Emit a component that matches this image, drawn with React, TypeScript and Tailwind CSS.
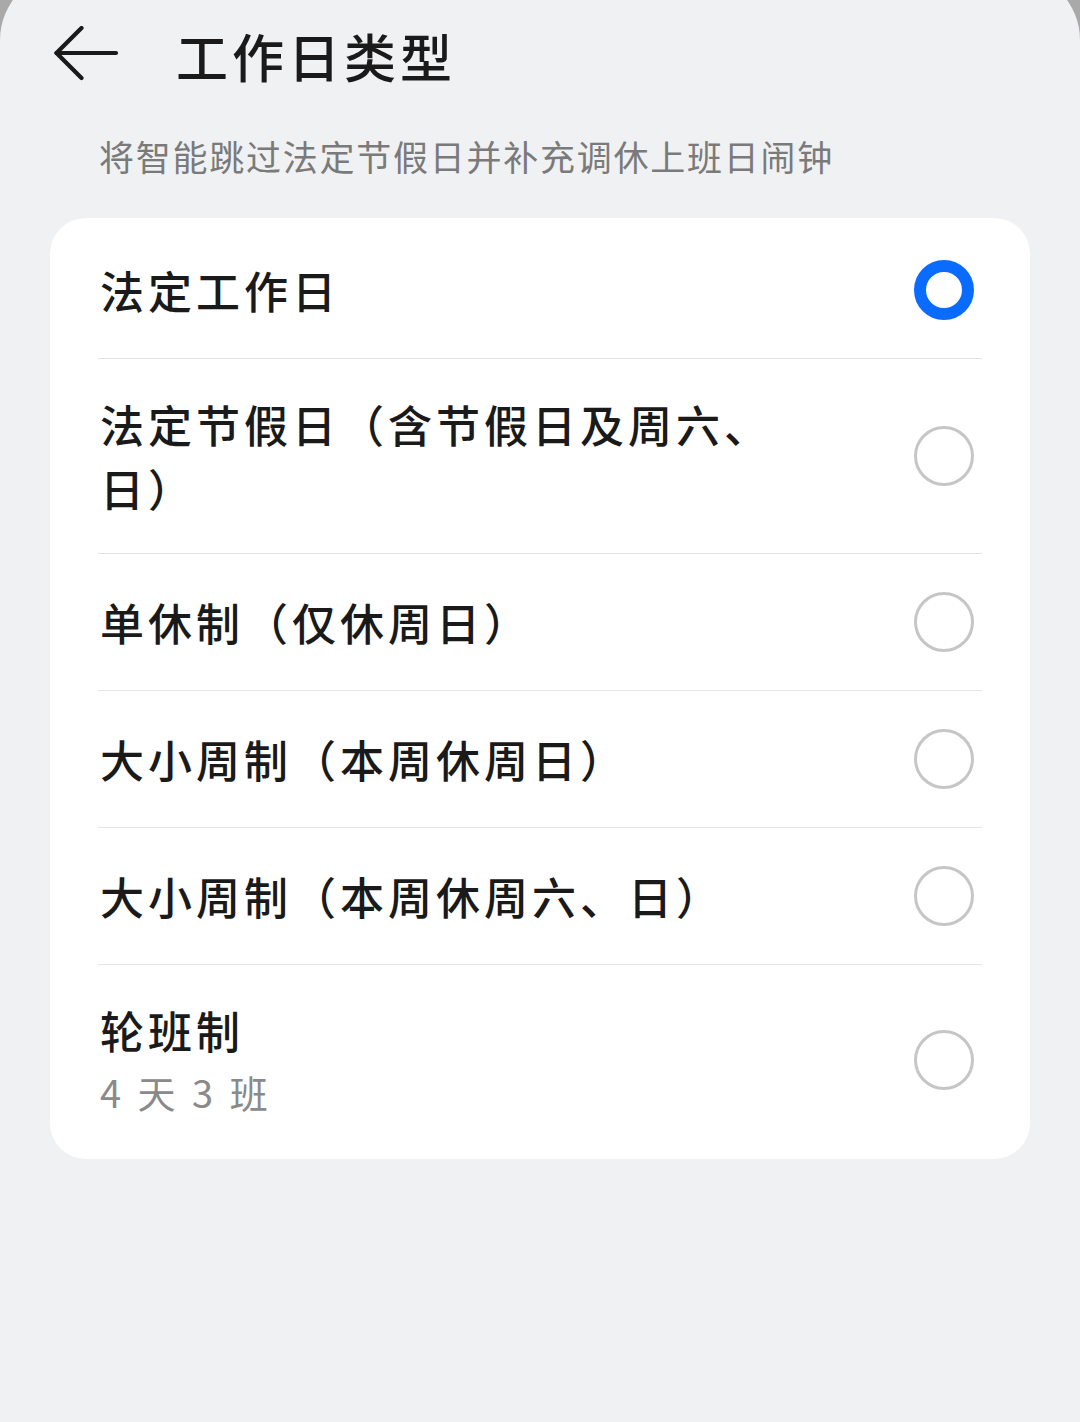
import React from "react";

const font = { fontFamily: '"Noto Sans CJK SC", "Noto Sans", sans-serif' };

type Item = { title: string; sub?: string; checked?: boolean };

const items: Item[] = [
  { title: "法定工作日", checked: true },
  { title: "法定节假日（含节假日及周六、日）" },
  { title: "单休制（仅休周日）" },
  { title: "大小周制（本周休周日）" },
  { title: "大小周制（本周休周六、日）" },
  { title: "轮班制", sub: "4 天 3 班" },
];

function Radio({ checked }: { checked?: boolean }) {
  if (checked) {
    return (
      <div className="w-[60px] h-[60px] rounded-full border-[12px] border-[#0a6cff] bg-white shrink-0" />
    );
  }
  return (
    <div className="w-[60px] h-[60px] rounded-full border-[3px] border-[#c6c6c6] bg-white shrink-0" />
  );
}

export default function App() {
  return (
    <div
      className="w-[1080px] h-[1422px] bg-[#a9a9a9] overflow-hidden [text-spacing-trim:space-all]"
      style={font}
    >
      <div className="-mt-[28px] pt-[28px] h-[1480px] rounded-t-[68px] bg-[#f0f1f3]">
        <div className="h-[112px] flex items-center">
          <div className="w-[176px] pl-[53px] flex items-center">
            <svg width="70" height="60" viewBox="0 0 70 60" fill="none">
              <path
                d="M3.5 27 H63"
                stroke="#1a1a1a"
                strokeWidth="4.2"
                strokeLinecap="round"
              />
              <path
                d="M28.5 2 L3.5 27 L28.5 52"
                stroke="#1a1a1a"
                strokeWidth="4.2"
                strokeLinecap="round"
                strokeLinejoin="round"
              />
            </svg>
          </div>
          <div className="text-[52px] leading-[112px] font-medium tracking-[4px] text-[#1a1a1a]">
            工作日类型
          </div>
        </div>
        <div className="mt-[18px] pl-[99px] text-[35px] leading-[52px] tracking-[1.75px] text-[#7a7a7a]">
          将智能跳过法定节假日并补充调休上班日闹钟
        </div>
        <div className="mt-[36px] mx-[50px] bg-white rounded-[36px] py-[4px] px-[48px]">
          {items.map((it, i) => (
            <div
              key={i}
              className={
                "flex items-center justify-between min-h-[137px] py-[33px] " +
                (i < items.length - 1 ? "border-b-[1.5px] border-[#e4e4e4]" : "")
              }
            >
              <div className="pl-[2px] max-w-[700px]">
                <div className="text-[44px] leading-[64px] font-medium tracking-[4px] text-[#1a1a1a]">
                  {it.title}
                </div>
                {it.sub && (
                  <div className="text-[38px] leading-[60px] tracking-[4px] text-[#8a8a8a]">
                    {it.sub}
                  </div>
                )}
              </div>
              <div className="mr-[8px]">
                <Radio checked={it.checked} />
              </div>
            </div>
          ))}
        </div>
      </div>
    </div>
  );
}
